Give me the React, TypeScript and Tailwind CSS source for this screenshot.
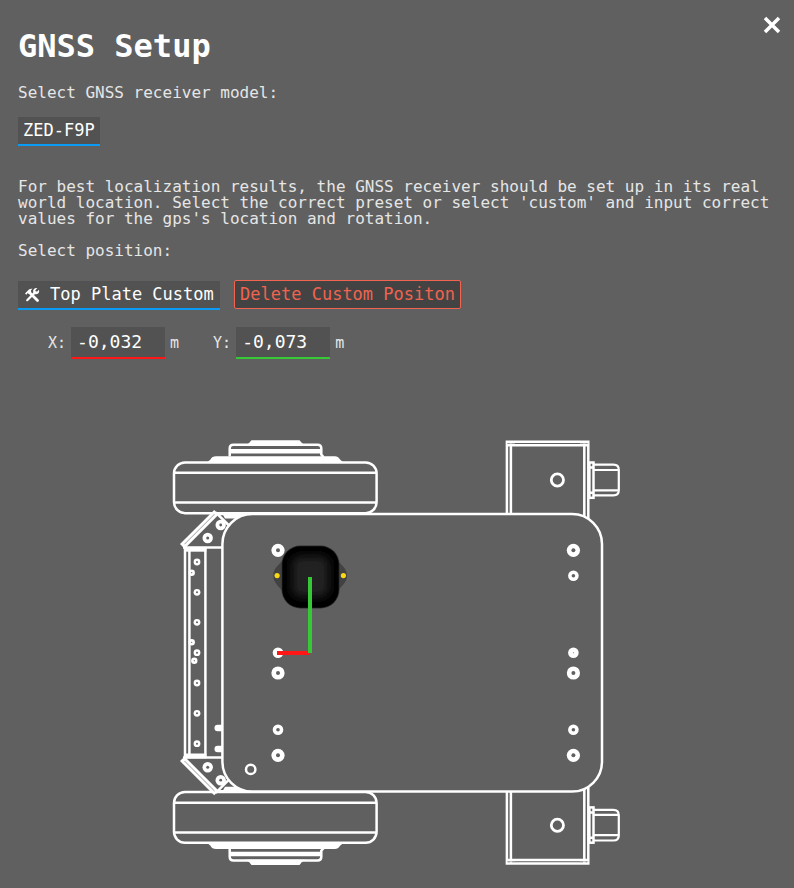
import { useState } from "react";

type Point = [number, number];

const railHoles: Point[] = [
  [197, 562], [197, 592.3], [197, 622.3], [197, 652.7], [197, 683], [197, 713.3], [197, 743.7],
];
const railRivets: Point[] = [[191.7, 572.7], [191.7, 642.3], [194.3, 660.7]];
const bigHoles: Point[] = [
  [278, 550.3], [278, 673], [278, 755.3], [573.4, 550.3], [573.4, 673], [573.4, 755.3],
];
const smallHoles: Point[] = [[278, 729.7], [573.4, 575.8], [573.4, 729.7]];
const solidHoles: Point[] = [[278, 652.7], [573.4, 652.7]];

function Hole({ at, r, inner }: { at: Point; r: number; inner: number }) {
  return (
    <g>
      <circle cx={at[0]} cy={at[1]} r={r} fill="#fff" stroke="none" />
      <circle cx={at[0]} cy={at[1]} r={inner} fill="#606060" stroke="none" />
    </g>
  );
}

/* Wheel, motor housing and bracket on one side of the chassis. */
function Side() {
  return (
    <g>
      <rect x="174" y="462.4" width="202.6" height="50.8" rx="11" />
      <path d="M174 472.7H376.6M174 502.4H376.6" />
      <path d="M207.500 462L210.500 459.500Q212 456.200 216 456.200H335Q338 456.200 340 459.500L343 462Z" fill="#fff" stroke="none" />
      <path d="M229.700 456.500V448.500Q229.700 444.800 233.500 444.800H317.500Q321.300 444.800 321.300 448.500V454.500L323.500 457" />
      <path d="M230 451.200H321" strokeWidth="4.400" />
      <path d="M245.500 445.500Q249 444 251.500 440.300H299.500Q302 444 305.500 445.500Z" fill="#fff" stroke="none" />
      <path d="M216.500 512.200L182.300 546.400" strokeWidth="6.500" />
      <path d="M214.500 514.200L184.500 544.200" stroke="#858585" strokeWidth="0.800" />
      <path d="M215.700 512.300L228.500 525M216 514H250" />
      <path d="M222.500 514H248L239 518.500H225Z" fill="#fff" stroke="none" />
      <path d="M183 547.600H222.500" />
      <Hole at={[220.700, 525]} r={5.200} inner={1.400} />
      <Hole at={[207.700, 538]} r={5.200} inner={1.500} />
      <path d="M184.300 549.300H206.300" strokeWidth="4.800" />
      <path d="M506.900 515V441.800H588.300V518M510.900 515V441.800M584.300 517V441.800M506.900 445.300H588.300" />
      <path d="M507 443.500H515M580 443.500H588.300" stroke="#aaa" strokeWidth="0.800" />
      <circle cx="557.400" cy="480" r="6.100" strokeWidth="2.800" />
      <rect x="589.400" y="462.500" width="4.100" height="35.300" />
      <path d="M589.400 467.500H593.500M589.400 492.800H593.500" />
      <path d="M593.500 464.700H613.500Q618.800 464.700 618.800 470V490Q618.800 495.400 613.500 495.400H593.500M593.500 470H618.800M593.500 490.300H618.800" strokeWidth="2.200" />
    </g>
  );
}

function RobotPlan() {
  return (
    <svg
      viewBox="172 438 450 428"
      className="mx-auto block w-full max-w-[450px]"
      role="img"
      aria-label="Receiver position on the top plate"
      fill="none"
      stroke="#fff"
      strokeWidth="2.500"
    >
      <defs>
        <filter id="soft" x="-30%" y="-30%" width="160%" height="160%">
          <feGaussianBlur stdDeviation="5" />
        </filter>
      </defs>
      <Side />
      <g transform="translate(0 1305.200) scale(1 -1)">
        <Side />
      </g>
      <path d="M185 547V758M189.400 547V758M205.400 547V758" />
      {railHoles.map((p) => <Hole key={p.join()} at={p} r={3.4} inner={1} />)}
      {railRivets.map((p) => <Hole key={p.join()} at={p} r={3.2} inner={0.6} />)}
      <path d="M217.700 728H222M217.700 749H222" strokeWidth="6.400" strokeLinecap="round" />
      <rect x="222.400" y="514" width="379.600" height="277.600" rx="30" fill="#606060" />
      <circle cx="250.700" cy="769.400" r="4.700" />
      {bigHoles.map((p) => <Hole key={p.join()} at={p} r={6.6} inner={2} />)}
      {smallHoles.map((p) => <Hole key={p.join()} at={p} r={5.3} inner={1.8} />)}
      {solidHoles.map((p) => <Hole key={p.join()} at={p} r={5.3} inner={0.5} />)}
      <g stroke="none">
        <path d="M284 559C279 565 273.300 568 273.300 575.700C273.300 583 279 586 284 593H336C341 586 347 583 347 575.700C347 568 341 565 336 559Z" fill="#424242" />
        <circle cx="277.100" cy="575.600" r="2.600" fill="#f8d816" />
        <circle cx="343.400" cy="575.600" r="2.600" fill="#f8d816" />
        <rect x="281.500" y="545.500" width="58" height="63" rx="19" fill="#303030" />
        <rect x="282.300" y="546.300" width="56.400" height="61.400" rx="18" fill="#000" />
        <rect x="292" y="556" width="37" height="41" rx="8" fill="#202020" filter="url(#soft)" />
      </g>
      <path d="M277 653H310" stroke="#ff1616" strokeWidth="4" />
      <path d="M310 577V653" stroke="#37c837" strokeWidth="4" />
    </svg>
  );
}

function ToolsIcon() {
  return (
    <svg viewBox="0 0 16 16" className="pointer-events-none absolute top-[6px] left-1.5 size-4" fill="none" stroke="#fff" aria-hidden="true">
      <path d="M5.500 5.500L13.500 13.500" strokeWidth="2.800" strokeLinecap="round" />
      <path d="M1 6.500L3.200 4.300L5 2.500Q6.500 1.300 8.500 1.800L7 3.300L7.200 5L5.200 7L3.800 6L2.300 7.700Z" fill="#fff" stroke="none" />
      <path d="M3.200 13.200L11 5.400" strokeWidth="2.200" strokeLinecap="round" />
      <path d="M13.300 1.200L11.500 3V4.500H13.200L15 2.800Q15.700 5.200 14.200 6.400Q12.700 7.600 10.800 6.900L9.200 5.300Q8.600 3.300 10 1.900Q11.400 0.600 13.300 1.200Z" fill="#fff" stroke="none" />
    </svg>
  );
}

const inputClass =
  "h-8 w-[94px] border-b-2 bg-[#525252] px-1.5 pb-0.5 text-[18px] leading-5 text-white outline-none";

const selectClass =
  "block h-[29px] appearance-none border-b-2 border-[#0a9bf5] bg-[#525252] pb-0.5 text-[17px] leading-6 text-white outline-none";

export default function App() {
  const [x, setX] = useState("-0,032");
  const [y, setY] = useState("-0,073");
  return (
    <main className="min-h-screen bg-[#606060] px-[18px] pt-7 pb-[22px] font-['DejaVu_Sans_Mono',monospace] text-base leading-4 text-[#e6e6e6]">
      <button type="button" aria-label="Close" className="absolute top-3 right-3 flex h-6 w-5 items-center justify-center text-white">
        <svg viewBox="0 0 20 20" className="size-5" fill="none" stroke="currentColor" strokeWidth="3.500">
          <path d="M3 4L17 18M17 4L3 18" />
        </svg>
      </button>
      <h1 className="text-[32px] leading-9 font-bold text-white">GNSS Setup</h1>
      <label htmlFor="model" className="mt-[21px] block w-fit">Select GNSS receiver model:</label>
      <select id="model" className={`${selectClass} mt-4 w-[82px] px-[5px]`}>
        <option>ZED-F9P</option>
      </select>
      <p className="mt-[33px]">
        For best localization results, the GNSS receiver should be set up in its real world location. Select the correct preset or select 'custom' and input correct values for the gps's location and rotation.
      </p>
      <label htmlFor="position" className="mt-4 block w-fit">Select position:</label>
      <div className="mt-[21px] flex gap-3.5">
        <div className="relative mt-px">
          <select id="position" className={`${selectClass} w-[202px] pl-8`}>
            <option>Top Plate Custom</option>
          </select>
          <ToolsIcon />
        </div>
        <button type="button" className="h-[29px] w-[227px] rounded-xs border border-[#f06450] bg-[#434343] pb-0.5 text-[17px] leading-6 whitespace-nowrap text-[#f06450]">
          Delete Custom Positon
        </button>
      </div>
      <div className="mt-[17px] ml-[30px] flex items-center gap-[34px]">
        <div className="flex items-center gap-[5px] text-[15px]">
          <label htmlFor="x">X:</label>
          <input id="x" value={x} onChange={(e) => setX(e.target.value)} className={`${inputClass} border-[#ff1616]`} />
          <span>m</span>
        </div>
        <div className="flex items-center gap-[5px] text-[15px]">
          <label htmlFor="y">Y:</label>
          <input id="y" value={y} onChange={(e) => setY(e.target.value)} className={`${inputClass} border-[#37c837]`} />
          <span>m</span>
        </div>
      </div>
      <div className="mt-[79px]">
        <RobotPlan />
      </div>
    </main>
  );
}
